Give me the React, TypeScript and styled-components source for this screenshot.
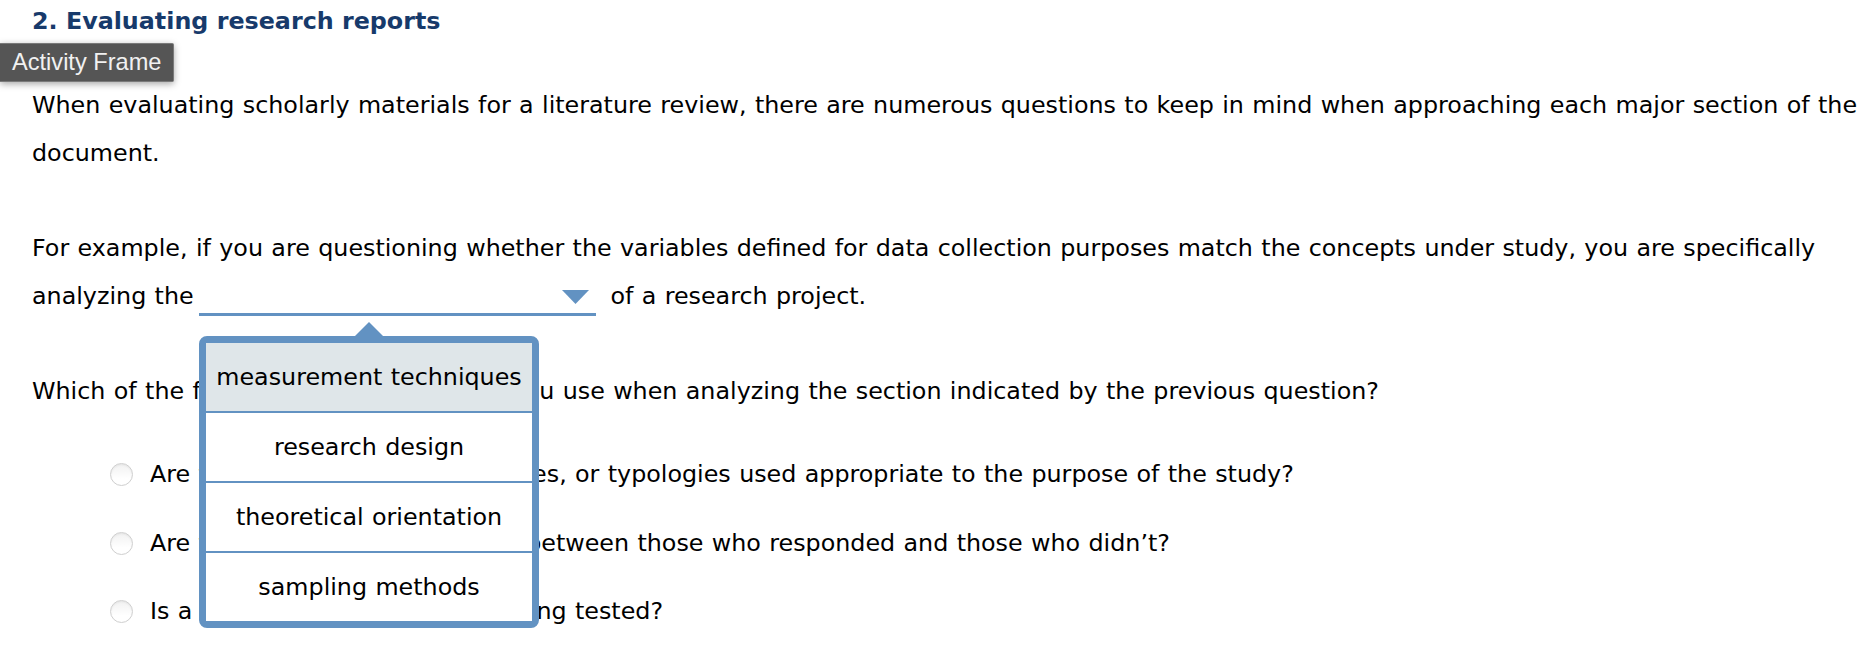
import React from "react";
import styled, { createGlobalStyle } from "styled-components";

const GlobalStyle = createGlobalStyle`
  html, body {
    margin: 0;
    padding: 0;
    background: #ffffff;
  }
  body {
    font-family: "DejaVu Sans", Verdana, sans-serif;
    color: #000000;
    overflow: hidden;
  }
`;

const BLUE = "#6292c2";

const Page = styled.main`
  width: 1868px;
  height: 654px;
  font-size: 23.8px;
  line-height: 47.6px;
  word-spacing: 0.8px;
`;

const Title = styled.h2`
  margin: 0;
  padding: 7px 0 0 32px;
  font-size: 23.8px;
  font-weight: bold;
  line-height: normal;
  word-spacing: 0;
  color: #173a6b;
`;

const FrameTag = styled.div`
  width: fit-content;
  margin-top: 8px;
  padding: 0 12px 0 12px;
  height: 39px;
  box-sizing: border-box;
  border: 1px solid #7a7a7a;
  border-left: 0;
  border-radius: 0 2px 2px 0;
  background: #555555;
  color: #f1f1f1;
  font-family: "Liberation Sans", Arial, sans-serif;
  font-size: 23.6px;
  line-height: 37px;
  word-spacing: 0;
  box-shadow: 0 2px 7px rgba(0, 0, 0, 0.35);
`;

const Content = styled.section`
  display: flex;
  flex-direction: column;
  padding-left: 32px;
`;

const Para = styled.p`
  margin: 0;
  & + & {
    margin-top: 48px;
  }
`;

const Blank = styled.span`
  position: relative;
  display: inline-flex;
  align-items: baseline;
  justify-content: space-between;
  width: 397px;
  box-sizing: border-box;
  padding: 0 7px 3px 0;
  margin: 0 6px 0 -3px;
  border-bottom: 3px solid ${BLUE};
  line-height: normal;
  vertical-align: baseline;
`;

const BlankValue = styled.span`
  min-width: 1px;
`;

const Menu = styled.div`
  position: absolute;
  left: 0;
  top: calc(100% + 23px);
  z-index: 2;
  width: 340px;
  box-sizing: border-box;
  border: 7px solid ${BLUE};
  border-radius: 8px;
  background: #ffffff;

  &::before {
    content: "";
    position: absolute;
    left: 50%;
    top: -21px;
    transform: translateX(-50%);
    border-left: 14px solid transparent;
    border-right: 14px solid transparent;
    border-bottom: 14px solid ${BLUE};
  }
`;

const MenuItem = styled.div<{ $active?: boolean }>`
  display: flex;
  align-items: center;
  justify-content: center;
  height: 68px;
  background: ${(p) => (p.$active ? "#dfe6e9" : "#ffffff")};
  color: #000000;
  line-height: normal;
  white-space: nowrap;

  & + & {
    border-top: 2px solid ${BLUE};
  }
`;

const Options = styled.div`
  display: flex;
  flex-direction: column;
  gap: 21px;
  margin-top: 35px;
  padding-left: 78px;
`;

const Option = styled.label`
  display: flex;
  align-items: center;
  gap: 17px;
`;

const Radio = styled.span`
  flex: none;
  width: 23px;
  height: 23px;
  box-sizing: border-box;
  border-radius: 50%;
  border: 1px solid #cfcfcf;
  background: linear-gradient(#f1f1f1, #ffffff 70%);
  box-shadow: inset 0 1px 2px rgba(0, 0, 0, 0.06);
`;

const Arrow = () => (
  <svg width="27" height="14" viewBox="0 0 27 14" aria-hidden="true">
    <path d="M0 0 H27 L13.5 14 Z" fill={BLUE} />
  </svg>
);

const choices = [
  "measurement techniques",
  "research design",
  "theoretical orientation",
  "sampling methods",
];

const answers = [
  "Are the measures, indexes, scales, or typologies used appropriate to the purpose of the study?",
  "Are there apparent differences between those who responded and those who didn’t?",
  "Is a clearly given hypothesis being tested?",
];

export default function App() {
  return (
    <>
      <GlobalStyle />
      <Page>
        <Title>2. Evaluating research reports</Title>
        <FrameTag>Activity Frame</FrameTag>
        <Content>
          <Para>
            When evaluating scholarly materials for a literature review, there are numerous
            questions to keep in mind when approaching each major section of the document.
          </Para>
          <Para>
            For example, if you are questioning whether the variables defined for data collection
            purposes match the concepts under study, you are specifically analyzing the{" "}
            <Blank>
              <BlankValue>{"\u200B"}</BlankValue>
              <Arrow />
              <Menu>
                {choices.map((c, i) => (
                  <MenuItem key={c} $active={i === 0}>
                    {c}
                  </MenuItem>
                ))}
              </Menu>
            </Blank>{" "}
            of a research project.
          </Para>
          <Para>
            Which of the following questions would you use when analyzing the section indicated by
            the previous question?
          </Para>
          <Options>
            {answers.map((a) => (
              <Option key={a}>
                <Radio />
                <span>{a}</span>
              </Option>
            ))}
          </Options>
        </Content>
      </Page>
    </>
  );
}
